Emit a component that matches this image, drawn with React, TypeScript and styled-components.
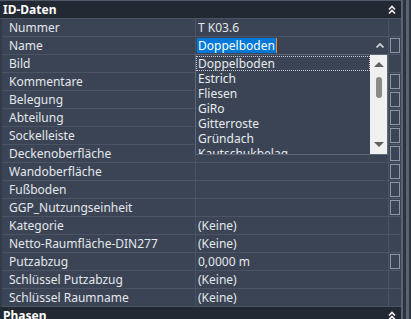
import styled, { createGlobalStyle } from "styled-components"
import { FC } from "react"

interface Prop {
  name: string
  value?: string
  box?: boolean
  editing?: boolean
}

const props: Prop[] = [
  { name: "Nummer", value: "T K03.6" },
  { name: "Name", box: true, editing: true },
  { name: "Bild" },
  { name: "Kommentare", box: true },
  { name: "Belegung", box: true },
  { name: "Abteilung", box: true },
  { name: "Sockelleiste", box: true },
  { name: "Deckenoberfläche", box: true },
  { name: "Wandoberfläche", box: true },
  { name: "Fußboden", box: true },
  { name: "GGP_Nutzungseinheit", box: true },
  { name: "Kategorie", value: "(Keine)" },
  { name: "Netto-Raumfläche-DIN277", value: "(Keine)" },
  { name: "Putzabzug", value: "0,0000 m", box: true },
  { name: "Schlüssel Putzabzug", value: "(Keine)" },
  { name: "Schlüssel Raumname", value: "(Keine)" },
]

const options = ["Doppelboden", "Estrich", "Fliesen", "GiRo", "Gitterroste", "Gründach", "Kautschukbelag"]

const GlobalStyle = createGlobalStyle`
  body {
    margin: 0;
    background: #3b4454;
    font-family: "Noto Sans", "Open Sans", sans-serif;
    font-size: 12px;
  }
`

const DoubleChevron = () => (
  <svg width="8" height="10" viewBox="0 0 8 10">
    <path d="M1 4.5 L4 1.5 L7 4.5" fill="none" stroke="#f2f2f2" strokeWidth="1.6" />
    <path d="M1 8.5 L4 5.5 L7 8.5" fill="none" stroke="#f2f2f2" strokeWidth="1.6" />
  </svg>
)

const SmallCaret = () => (
  <svg width="8" height="5" viewBox="0 0 8 5">
    <path d="M0.5 4.5 L4 1 L7.5 4.5" fill="none" stroke="#c8ccd2" strokeWidth="1.8" />
  </svg>
)

const Dropdown: FC = () => (
  <DropList>
    <Items>
      {options.map((o, i) => (
        <Item key={o} $focused={i === 0}>{o}</Item>
      ))}
    </Items>
    <ListScroll>
      <Arrow $down={false} />
      <Thumb />
      <Arrow $down />
    </ListScroll>
  </DropList>
)

const Row: FC<{ p: Prop }> = ({ p }) => (
  <RowBox>
    <NameCell>{p.name}</NameCell>
    <ValueCell $editing={p.editing}>
      {p.editing ? (
        <>
          <Selected>Doppelboden</Selected>
          <Caret />
          <CaretButton><SmallCaret /></CaretButton>
          <Dropdown />
        </>
      ) : p.value}
    </ValueCell>
    <BoxCell>{p.box && <EditBox />}</BoxCell>
  </RowBox>
)

const App = () => {
  return <Palette>
    <GlobalStyle />
    <Main>
      <SectionHeader>
        <span>ID-Daten</span>
        <ChevronSlot><DoubleChevron /></ChevronSlot>
      </SectionHeader>
      <Rows>
        {props.map(p => <Row key={p.name} p={p} />)}
      </Rows>
      <SectionHeader>
        <span>Phasen</span>
        <ChevronSlot><DoubleChevron /></ChevronSlot>
      </SectionHeader>
    </Main>
    <ScrollStrip>
      <ScrollTrack />
    </ScrollStrip>
  </Palette>
}

export default App

const Palette = styled.div`
  display: flex;
  width: 411px;
  height: 319px;
  overflow: hidden;
  background: #3b4454;
  color: #e4e7ec;
`

const Main = styled.div`
  width: 403px;
  flex: none;
  border-top: 1px solid #4f5869;
  border-right: 2px solid #5a6373;
  box-sizing: border-box;
`

const SectionHeader = styled.div`
  height: 17px;
  display: flex;
  align-items: center;
  justify-content: space-between;
  padding-left: 3px;
  background: #232932;
  color: #ffffff;
  font-weight: bold;
  border-bottom: 1px solid #4b5465;
`

const ChevronSlot = styled.div`
  width: 13px;
  display: flex;
  justify-content: flex-start;
  padding-top: 1px;
`

const Rows = styled.div`
  display: flex;
  flex-direction: column;
  border-left: 2px solid #333b48;
`

const RowBox = styled.div`
  display: grid;
  grid-template-columns: 194px 193px 12px;
  height: 18px;
  border-bottom: 1px solid #4b5465;
  box-sizing: border-box;
`

const NameCell = styled.div`
  display: flex;
  align-items: center;
  padding-left: 7px;
  border-right: 1px solid #4b5465;
  white-space: nowrap;
  overflow: hidden;
`

const ValueCell = styled.div<{ $editing?: boolean }>`
  position: relative;
  display: flex;
  align-items: center;
  padding-left: ${p => (p.$editing ? "1px" : "2px")};
  border-right: 1px solid #4b5465;
  white-space: nowrap;
`

const Selected = styled.span`
  background: #0078d7;
  color: #ffffff;
  line-height: 15px;
  padding: 0 1px;
`

const Caret = styled.span`
  width: 1px;
  height: 15px;
  background: #f08a24;
`

const CaretButton = styled.div`
  margin-left: auto;
  margin-right: 4px;
  display: flex;
  align-items: center;
`

const BoxCell = styled.div`
  display: flex;
  align-items: center;
  justify-content: center;
`

const EditBox = styled.div`
  width: 10px;
  height: 15px;
  box-sizing: border-box;
  border: 1px solid #8b96a8;
  background: #3b4454;
`

const DropList = styled.div`
  position: absolute;
  top: 17px;
  left: -1px;
  width: 193px;
  height: 101px;
  display: flex;
  box-sizing: border-box;
  border: 1px solid #5d6778;
  background: #3b4454;
  z-index: 2;
  overflow: hidden;
`

const Items = styled.div`
  flex: 1;
  display: flex;
  flex-direction: column;
  overflow: hidden;
  padding-top: 1px;
`

const Item = styled.div<{ $focused?: boolean }>`
  flex: none;
  height: 15px;
  line-height: 16px;
  padding-left: 2px;
  color: #e8ebef;
  box-sizing: border-box;
  outline: ${p => (p.$focused ? "1px dotted #c8ccd2" : "none")};
  outline-offset: -1px;
`

const ListScroll = styled.div`
  width: 17px;
  flex: none;
  background: #f0f0f0;
  display: flex;
  flex-direction: column;
  align-items: center;
`

const Arrow = styled.div<{ $down: boolean }>`
  width: 0;
  height: 0;
  margin: ${p => (p.$down ? "auto 0 7px" : "7px 0 0")};
  border-left: 5px solid transparent;
  border-right: 5px solid transparent;
  ${p => (p.$down ? "border-top: 5px solid #606060;" : "border-bottom: 5px solid #606060;")}
`

const Thumb = styled.div`
  width: 6px;
  height: 21px;
  margin-top: 10px;
  border-radius: 3px;
  background: #8a8a8a;
`

const ScrollStrip = styled.div`
  flex: 1;
  background: #2c333e;
  display: flex;
  justify-content: center;
`

const ScrollTrack = styled.div`
  width: 3px;
  background: #5a6373;
`
